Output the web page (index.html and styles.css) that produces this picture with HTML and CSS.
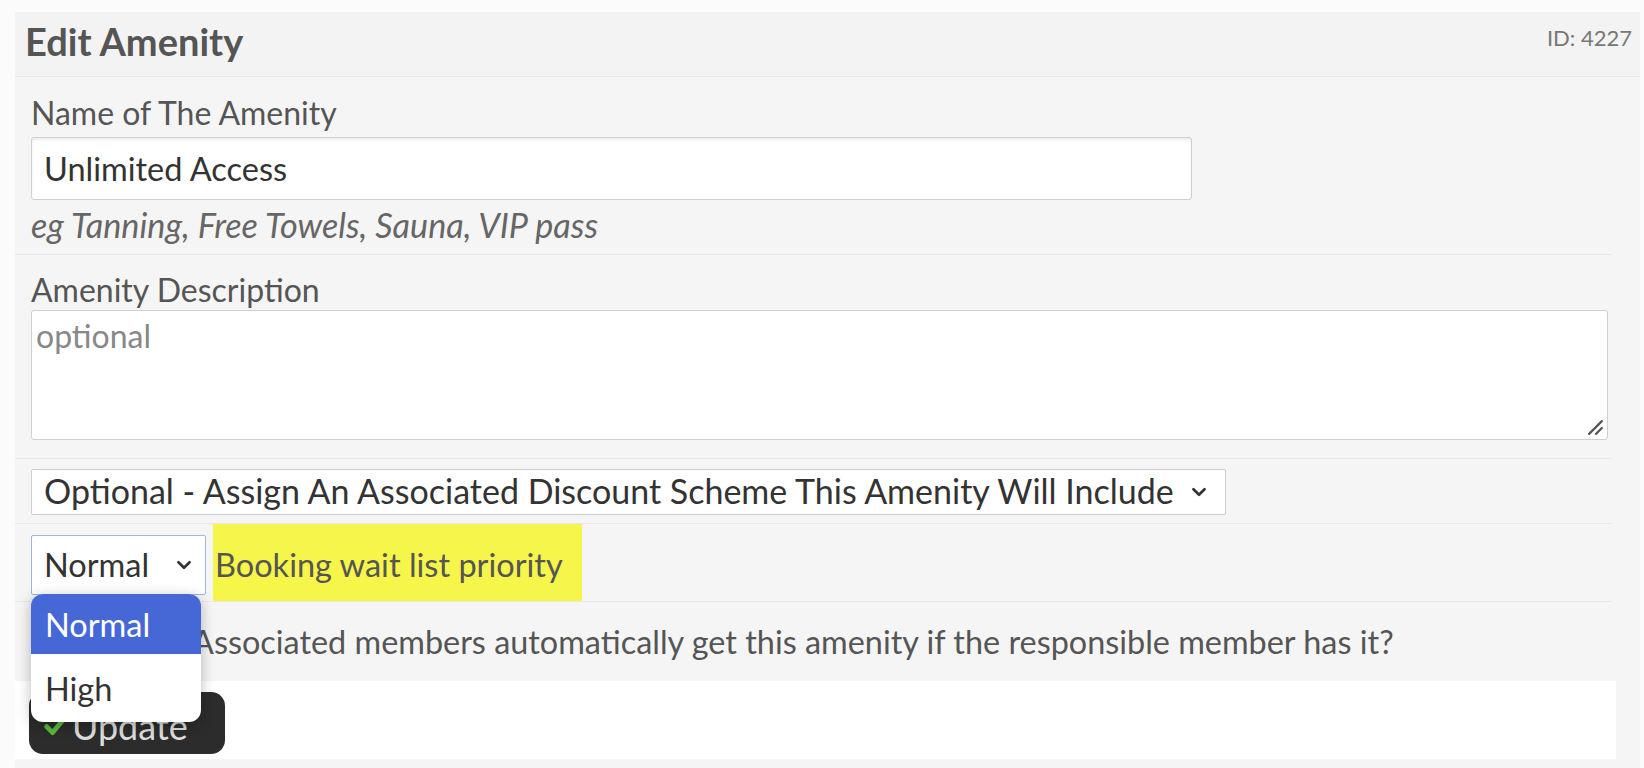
FILE: index.html
```html
<!DOCTYPE html>
<html lang="en">
<head>
<meta charset="utf-8">
<title>Edit Amenity</title>
<link rel="stylesheet" href="styles.css">
</head>
<body>
<div class="panel">
  <div class="panel-head">
    <h1 class="title">Edit Amenity</h1>
    <span class="id-tag">ID: 4227</span>
  </div>
  <div class="form">
    <div class="row row-name">
      <label class="label">Name of The Amenity</label>
      <input class="text-input" type="text" value="Unlimited Access">
      <div class="help">eg Tanning, Free Towels, Sauna, VIP pass</div>
    </div>
    <div class="row row-desc">
      <label class="label">Amenity Description</label>
      <div class="textarea-wrap">
        <textarea class="textarea" placeholder="optional"></textarea>
        <svg class="grip" viewBox="0 0 16 16" width="17" height="17"><path d="M2 14 L14 2 M8.5 14 L14 8.5" fill="none" stroke="#555" stroke-width="2" stroke-linecap="round"/></svg>
      </div>
    </div>
    <div class="row row-scheme">
      <div class="select select-wide">
        <span class="sel-text">Optional - Assign An Associated Discount Scheme This Amenity Will Include</span>
        <svg class="chev" viewBox="0 0 14 9" width="16" height="10"><path d="M2 2 L7 7 L12 2" fill="none" stroke="#333" stroke-width="2.4" stroke-linecap="round" stroke-linejoin="round"/></svg>
      </div>
    </div>
    <div class="row row-priority">
      <div class="select select-small focused">
        <span class="sel-text">Normal</span>
        <svg class="chev" viewBox="0 0 14 9" width="16" height="10"><path d="M2 2 L7 7 L12 2" fill="none" stroke="#333" stroke-width="2.4" stroke-linecap="round" stroke-linejoin="round"/></svg>
      </div>
      <span class="highlight">Booking wait list priority</span>
      <div class="dropdown">
        <div class="option selected">Normal</div>
        <div class="option option-high">High</div>
      </div>
    </div>
    <div class="row row-check">
      <span class="checkbox"></span>
      <span class="check-text">Associated members automatically get this amenity if the responsible member has it?</span>
    </div>
  </div>
  <div class="footer">
    <button class="btn" type="button">
      <svg class="tick" viewBox="0 0 20 20" width="24" height="24"><path d="M3 10.5 L8 15.5 L17 4.5" fill="none" stroke="#5cb83c" stroke-width="4" stroke-linecap="round" stroke-linejoin="round"/></svg>
      <span>Update</span>
    </button>
  </div>
</div>
</body>
</html>
```
FILE: styles.css
```css
* { box-sizing: border-box; }
html, body { margin: 0; padding: 0; }
body {
  background: #fbfbfb;
  font-family: Lato, "Open Sans", sans-serif;
  color: #555;
  height: 768px;
  overflow: hidden;
}
.panel {
  margin: 12px 4px 0 15px;
  background: #f5f5f5;
  position: relative;
  padding-bottom: 20px;
}
.panel-head {
  height: 65px;
  background: #f3f3f3;
  border-bottom: 1px solid #e6e6e6;
  display: flex;
  align-items: center;
  padding: 0 0 6px 10px;
}
.title {
  margin: 0;
  font-size: 38px;
  font-weight: 700;
  color: #555;
}
.id-tag {
  position: absolute;
  top: 12px;
  right: 8px;
  font-size: 22px;
  color: #777;
}
.form {
  padding-right: 28px;
}
.row {
  padding-left: 16px;
  border-bottom: 1px solid #e9e9e9;
}
.label {
  display: block;
  font-size: 32px;
  line-height: 38px;
  color: #555;
}
.row-name { padding-top: 17px; padding-bottom: 10px; }
.text-input {
  display: block;
  margin-top: 5px;
  width: 1161px;
  height: 63px;
  border: 1px solid #cfcfcf;
  border-radius: 3px;
  background: #fff;
  box-shadow: inset 0 2px 3px rgba(0,0,0,0.07);
  font-family: Lato, sans-serif;
  font-size: 32.5px;
  color: #333;
  padding: 0 12px;
  outline: none;
}
.help {
  margin-top: 6px;
  font-size: 34.2px;
  line-height: 38px;
  font-style: italic;
  color: #666;
}
.row-desc { padding-top: 16px; padding-bottom: 18px; }
.textarea-wrap {
  position: relative;
  width: 1577px;
  margin-top: 1px;
}
.textarea {
  display: block;
  width: 100%;
  height: 130px;
  border: 1px solid #cfcfcf;
  border-radius: 3px;
  background: #fff;
  font-family: Lato, sans-serif;
  font-size: 32px;
  color: #333;
  padding: 5px 4px;
  resize: none;
  outline: none;
}
.textarea::placeholder { color: #888; }
.grip {
  position: absolute;
  right: 4px;
  bottom: 4px;
}
.row-scheme { padding-top: 10px; padding-bottom: 8px; }
.select {
  display: inline-flex;
  align-items: center;
  background: #fff;
  border: 1px solid #cfcfcf;
  border-radius: 2px;
  font-size: 34px;
  color: #333;
  height: 46px;
  padding: 0 12px;
  gap: 10px;
}
.sel-text { white-space: nowrap; margin-top: -3px; }
.select-wide { width: 1195px; justify-content: space-between; padding-right: 18px; }
.chev { flex: none; }
.row-priority {
  display: flex;
  align-items: center;
  position: relative;
  height: 78px;
  padding-top: 4px;
}
.select-small {
  width: 175px;
  height: 60px;
  font-size: 32.5px;
  padding: 0 13px 0 12px;
  justify-content: space-between;
}
.select-small .sel-text { margin-top: 0; }
.focused { border-color: #9fb7d8; }
.highlight {
  margin-left: 7px;
  align-self: stretch;
  margin-top: -4px;
  display: flex;
  align-items: center;
  padding: 4px 19px 0 2px;
  background: #f6f64a;
  color: #555;
  font-size: 32.5px;
}
.dropdown {
  position: absolute;
  left: 16px;
  top: 70px;
  width: 170px;
  background: #fff;
  border-radius: 12px;
  box-shadow: 0 3px 14px rgba(0,0,0,0.28);
  overflow: hidden;
  z-index: 5;
  padding-bottom: 2px;
}
.option {
  height: 60px;
  display: flex;
  align-items: center;
  padding-left: 14px;
  font-size: 32.5px;
  color: #333;
}
.option-high { height: 66px; padding-top: 2px; }
.option.selected { background: #4667d6; color: #fff; }
.row-check {
  display: flex;
  align-items: center;
  height: 79px;
  border-bottom: none;
}
.checkbox {
  width: 26px;
  height: 26px;
  border: 1px solid #888;
  border-radius: 3px;
  background: #fff;
  margin-right: 135px;
  flex: none;
}
.check-text { font-size: 32.4px; color: #555; }
.footer {
  background: #fff;
  margin-right: 24px;
  height: 78px;
  padding: 11px 0 0 14px;
}
.btn {
  display: inline-flex;
  align-items: center;
  gap: 5px;
  height: 62px;
  width: 196px;
  padding: 6px 12px 0 14px;
  background: #2c2c2c;
  border: none;
  border-radius: 14px;
  color: #ddd;
  font-family: Lato, sans-serif;
  font-size: 36px;
}
```
